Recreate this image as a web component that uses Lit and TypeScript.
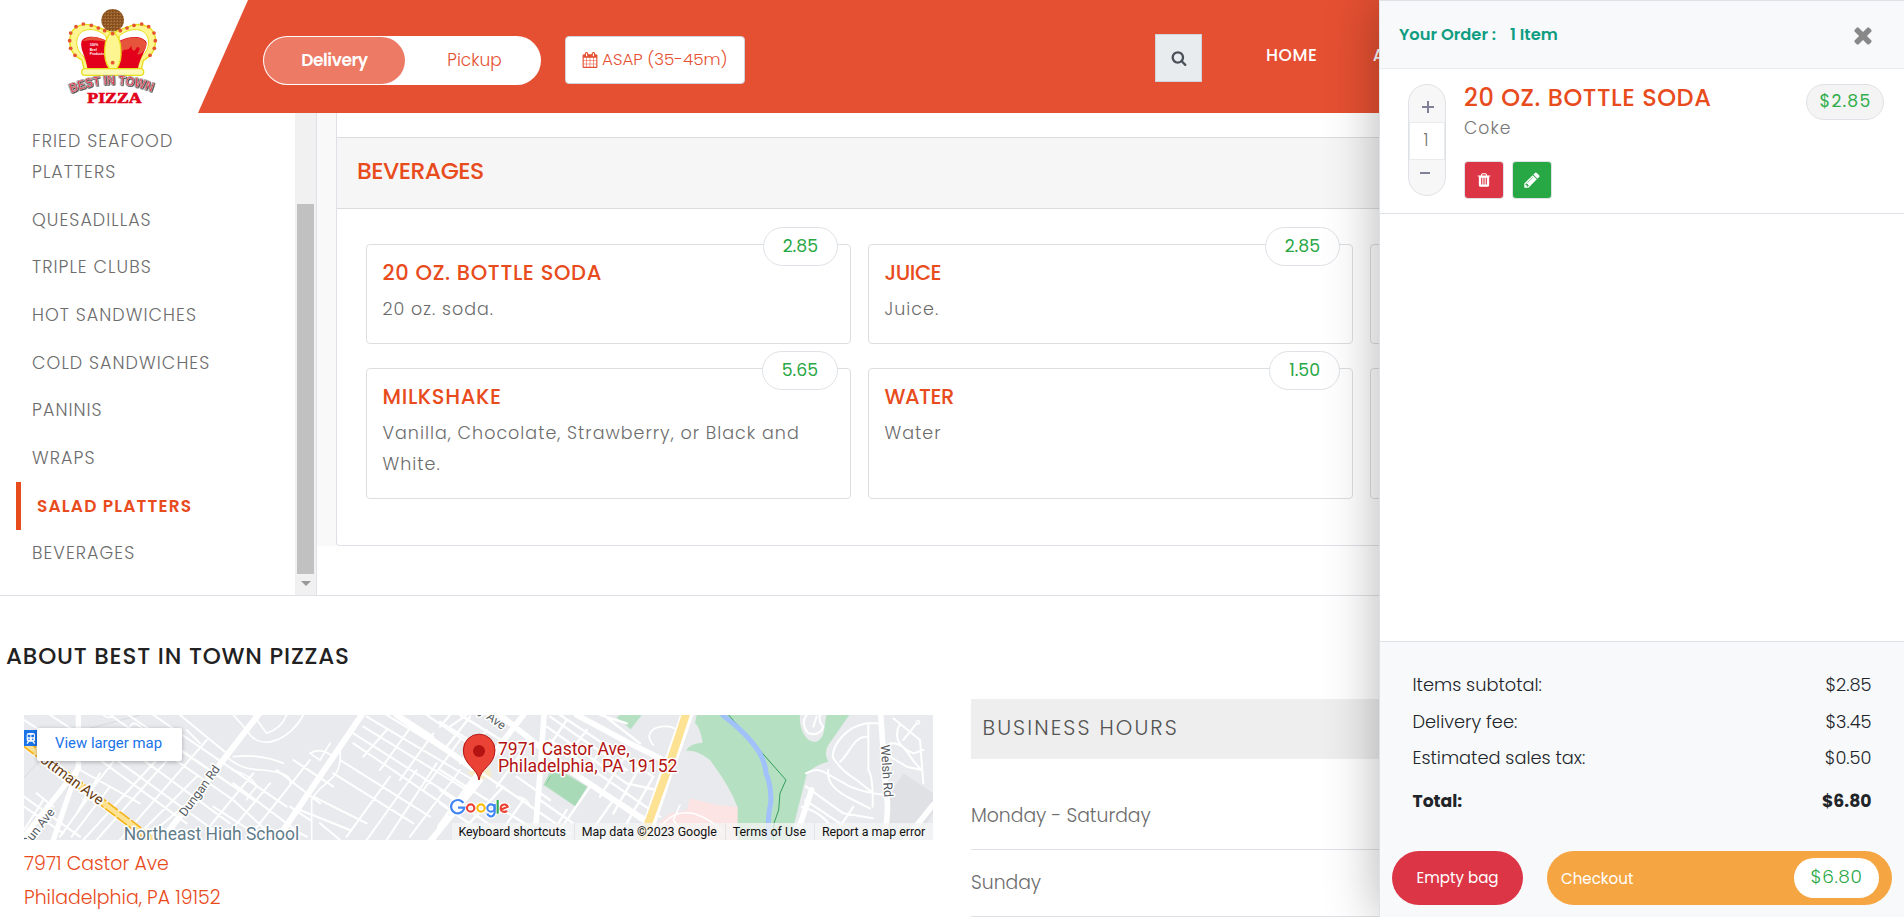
import { LitElement, html, svg, css } from "lit";
import { classMap } from "lit/directives/class-map.js";

const ICONS: Record<string, string> = {
  search: "M1216 832q0-185-131.5-316.5t-316.5-131.5-316.5 131.5-131.5 316.5 131.5 316.5 316.5 131.5 316.5-131.5 131.5-316.5zm512 832q0 52-38 90t-90 38q-54 0-90-38l-343-342q-179 124-399 124-143 0-273.5-55.5t-225-150-150-225-55.5-273.5 55.5-273.5 150-225 225-150 273.5-55.5 273.5 55.5 225 150 150 225 55.5 273.5q0 220-124 399l343 343q37 37 37 90z",
  trash: "M704 1376v-704q0-14-9-23t-23-9h-64q-14 0-23 9t-9 23v704q0 14 9 23t23 9h64q14 0 23-9t9-23zm256 0v-704q0-14-9-23t-23-9h-64q-14 0-23 9t-9 23v704q0 14 9 23t23 9h64q14 0 23-9t9-23zm256 0v-704q0-14-9-23t-23-9h-64q-14 0-23 9t-9 23v704q0 14 9 23t23 9h64q14 0 23-9t9-23zm-544-992h448l-48-117q-7-9-17-11h-317q-10 2-17 11zm928 32v64q0 14-9 23t-23 9h-96v948q0 83-47 143.5t-113 60.5h-832q-66 0-113-58.5t-47-141.5v-952h-96q-14 0-23-9t-9-23v-64q0-14 9-23t23-9h309l70-167q15-37 54-63t79-26h320q40 0 79 26t54 63l70 167h309q14 0 23 9t9 23z",
  pencil: "M491 1536l91-91-235-235-91 91v107h128v128h107zm523-928q0-22-22-22-10 0-17 7l-542 542q-7 7-7 17 0 22 22 22 10 0 17-7l542-542q7-7 7-17zm-54-192l416 416-832 832h-416v-416zm683 96q0 53-37 90l-166 166-416-416 166-165q36-38 90-38 53 0 91 38l235 234q37 39 37 91z",
  times: "M1490 1322q0 40-28 68l-136 136q-28 28-68 28t-68-28l-294-294-294 294q-28 28-68 28t-68-28l-136-136q-28-28-28-68t28-68l294-294-294-294q-28-28-28-68t28-68l136-136q28-28 68-28t68 28l294 294 294-294q28-28 68-28t68 28l136 136q28 28 28 68t-28 68l-294 294 294 294q28 28 28 68z",
  calendar: "M192 1664h288v-288h-288v288zm352 0h320v-288h-320v288zm-352-352h288v-320h-288v320zm352 0h320v-320h-320v320zm-352-384h288v-288h-288v288zm736 736h320v-288h-320v288zm-384-736h320v-288h-320v288zm768 736h288v-288h-288v288zm-384-352h320v-320h-320v320zm-352-864v-288q0-13-9.5-22.5t-22.5-9.5h-64q-13 0-22.5 9.5t-9.5 22.5v288q0 13 9.5 22.5t22.5 9.5h64q13 0 22.5-9.5t9.5-22.5zm736 864h288v-320h-288v320zm-384-384h320v-288h-320v288zm384 0h288v-288h-288v288zm32-480v-288q0-13-9.5-22.5t-22.5-9.5h-64q-13 0-22.5 9.5t-9.5 22.5v288q0 13 9.5 22.5t22.5 9.5h64q13 0 22.5-9.5t9.5-22.5zm384-64v1280q0 52-38 90t-90 38h-1408q-52 0-90-38t-38-90v-1280q0-52 38-90t90-38h128v-96q0-66 47-113t113-47h64q66 0 113 47t47 113v96h384v-96q0-66 47-113t113-47h64q66 0 113 47t47 113v96h128q52 0 90 38t38 90z",
};

const icon = (name: string, size: number) => html`<svg class="icon" width=${size} height=${size} viewBox="0 0 1792 1792" aria-hidden="true"><path fill="currentColor" d=${ICONS[name]} /></svg>`;

class BrandLogo extends LitElement {
  static styles = css`
    :host { display: block; }
    svg { display: block; }
    .ribbon { font: 700 39px "Liberation Sans", Arial, sans-serif; filter: drop-shadow(2px 2px 0 #333) drop-shadow(-1px 0 0 #666); }
    .word { font: 700 46px "Liberation Serif", serif; }
  `;
  render() {
    const beads: [number, number][] = [[228, 80], [250, 72], [274, 76], [295, 84], [314, 92], [212, 99], [209, 122], [212, 145], [225, 166], [338, 101], [361, 92], [381, 84], [402, 76], [425, 72], [446, 80], [462, 99], [466, 122], [463, 145], [450, 166], [338, 188]];
    return html`
      <svg width="92" height="98" viewBox="198 21 276 294">
        <defs>
          <pattern id="crumb" width="9" height="9" patternUnits="userSpaceOnUse">
            <rect width="9" height="9" fill="#7b4218" />
            <path d="M1 1h3v3h-3zM5 5h3v2h-3zM6 1h2v2h-2zM1 6h2v2h-2z" fill="#d09a4e" />
          </pattern>
          <path id="arc" d="M214 279Q338 227 466 279" />
        </defs>
        <circle cx="338" cy="61" r="34" fill="url(#crumb)" />
        <path d="M252 208L246 180C215 165 206 140 210 112C216 78 250 66 282 78C310 86 324 94 338 100C352 94 370 84 396 76C428 68 460 80 466 112C470 142 458 166 430 182L424 208Z" fill="#fdf58f" stroke="#e8df1c" stroke-width="4" />
        <path d="M250 168C226 150 222 110 248 94C272 82 300 92 318 108L322 150L300 190L262 196Z" fill="#fff" stroke="#e8df1c" stroke-width="3" />
        <path d="M426 168C450 150 454 110 428 94C404 82 376 92 358 108L354 150L376 190L414 196Z" fill="#fff" stroke="#e8df1c" stroke-width="3" />
        <path d="M262 205C258 170 240 150 244 126C250 106 290 104 322 124L324 205Z" fill="#e2001a" />
        <path d="M414 205C420 170 440 150 440 128C430 106 388 106 356 124L354 205Z" fill="#e2001a" />
        <path d="M248 124C262 104 300 108 322 126C296 120 268 118 248 124ZM358 126C386 108 426 108 438 128C442 150 418 168 412 162C424 144 418 140 410 142C404 160 394 152 394 136C384 160 372 140 368 156C364 150 366 136 358 144Z" fill="#e6553b" />
        <path d="M338 96C308 110 308 180 328 206H350C370 180 368 110 338 96Z" fill="#fdf58f" stroke="#e8df1c" stroke-width="4" />
        <rect x="245" y="206" width="186" height="20" rx="10" fill="#fdf9b8" stroke="#e8df1c" stroke-width="4" />
        ${beads.map(([x, y]) => svg`<circle cx=${x} cy=${y} r="5.6" fill="#e5532f" />`)}
        <g fill="#fff" font-family="Liberation Sans" font-size="10" font-weight="700">
          <text x="269" y="138">100%</text><text x="269" y="152">Beef</text><text x="269" y="166">Products</text>
        </g>
        <text class="ribbon" fill="#e23a4a" stroke="#d6d6d6" stroke-width="1.5"><textPath href="#arc" textLength="248" lengthAdjust="spacingAndGlyphs">BEST IN TOWN</textPath></text>
        <text class="word" x="262" y="308" fill="#e2001a" stroke="#e2001a" stroke-width="2" textLength="163" lengthAdjust="spacingAndGlyphs">PIZZA</text>
      </svg>`;
  }
}
customElements.define("brand-logo", BrandLogo);

class StoreMap extends LitElement {
  static styles = css`
    :host { display: block; position: relative; height: 125px; overflow: hidden; font-family: Roboto, sans-serif; }
    svg { display: block; }
    text { font-family: Roboto, sans-serif; }
    .larger { position: absolute; left: 13px; top: 13px; width: 145px; height: 33px; background: #fff; border-radius: 2px; box-shadow: 0 1px 4px rgba(0, 0, 0, .3); color: #1a73e8; font-size: 14.9px; line-height: 31px; padding-left: 18px; box-sizing: border-box; white-space: nowrap; }
    .legal { position: absolute; right: 0; bottom: 0; display: flex; height: 17px; line-height: 17px; font-size: 12.4px; color: #111; background: rgba(245, 245, 245, .75); white-space: nowrap; }
    .legal span { padding: 0 8.3px 0 6.6px; }
    .legal span:last-child { padding-right: 7.700px; }
    .legal span + span { border-left: 1px solid #e3e4e7; }
  `;
  render() {
    return html`
      <svg width="909" height="125" viewBox="0 0 909 125">
        <rect width="909" height="125" fill="#e8eaed" />
        <g transform="translate(-24 -25) scale(.33333)" fill="none" stroke="#fff" stroke-linecap="round">
          <path stroke="#d8dade" stroke-width="3" d="M72 262L130 200M250 120L420 75M165 450L215 250" />
          <path stroke-width="6" d="M150 75L235 130M72 90L120 120M330 75L700 330L830 450M385 75L760 330M460 75L860 350M540 75L680 190M230 130L240 170M300 210L560 400M350 210L640 420M430 210L690 400M500 150L760 330M560 120L600 160M72 350L190 430M72 320L240 440M110 310L160 350M240 240L420 340M250 450L460 220M290 450L520 190M360 450L620 150M215 440L330 290M180 440L260 330M400 450L590 260M430 450L610 300M620 420L760 250M670 450L810 280M740 450L930 210M330 360L470 210M250 330L340 215M230 370L300 250M72 420L130 330M640 350L780 440M700 280L900 430M880 210L1000 290M830 240L960 340" />
          <path stroke-width="5" d="M700 75L740 120C780 190 870 150 910 75M760 75L800 130C830 120 850 100 860 75M740 110Q700 160 680 200Q720 240 790 240Q880 250 870 280M700 200Q780 190 850 220M1020 180C1030 280 960 270 935 330V450M1000 200Q960 170 930 190L960 210L990 160M390 110Q400 90 420 110L500 160M310 75Q330 90 340 75M700 240Q760 260 770 290Q750 310 740 330" />
          <path stroke-width="6" d="M900 360L1050 420M940 320L1100 400M1000 250L1240 400M1020 210L1290 380M1060 160L1340 350M1060 130L1390 340M1090 110L1400 300M1100 80L1420 270M1160 75L1430 240M1200 75L1300 140M1280 75L1420 170M1040 440L1170 260M1100 450L1250 240M1160 450L1310 220M1230 440L1380 240M1090 200L1160 120M1140 240L1240 100M1200 270L1300 130M1270 300L1380 150M960 400L1020 450M870 350L930 390M880 420L920 440M1380 75L1440 110M1350 110L1400 75" />
          <path stroke-width="16" d="M235 75V230L160 450M72 440L235 235" />
          <path stroke-width="18" d="M778 70L500 430M1085 75L830 450M1190 75L1440 250M1440 270L1290 455" />
          <path stroke="#fff" stroke-width="26" d="M72 160L440 440" />
          <path stroke="#fde293" stroke-width="20" d="M72 160L440 440L460 452" />
          <path stroke="#f5b31c" stroke-width="5" stroke-dasharray="34 10" d="M72 170L440 450M80 152L450 434" />
        </g>
        <g transform="translate(416 -25) scale(.33333)" fill="none" stroke="#fff" stroke-linecap="round" stroke-linejoin="round">
          <g stroke="none">
            <path fill="#b6e0c2" d="M770 75H1080C1076 120 1100 160 1130 155C1160 140 1150 105 1160 75H1228L1165 165Q1150 190 1165 215Q1110 230 1098 260L1050 450H890L892 350Q870 290 810 210Q770 180 738 182Q750 160 788 158Q780 110 765 100Z" />
            <path fill="#b6e0c2" d="M530 82L540 75H605L572 118ZM340 225L440 290L405 348L310 285Z" />
            <path fill="#fbe4e3" d="M680 450L640 410L690 370L740 360L750 325L830 345L893 350V450Z" />
            <path fill="#dfe1e5" d="M1340 330L1390 250L1479 310V370L1430 450H1350Z" />
            <path fill="#f6ecc8" d="M80 245L150 235L155 262L110 270Z" />
          </g>
          <path stroke="#2f9d5b" stroke-width="3" d="M866 75L1038 270L1020 310L1016 360L1002 400L1000 450M318 284L330 262L350 250" />
          <path stroke="#a0c1f9" stroke-width="15" d="M848 75Q900 115 930 150Q975 200 978 250Q995 290 992 340Q982 380 985 450" />
          <path stroke-width="7" d="M0 95L110 165M0 170L120 245L390 430M0 240L300 430M0 300L200 440M0 340L130 430M60 75L250 190M330 80L560 240M360 75L640 260M320 110L560 280M330 150L660 380M330 200L640 400M300 330L400 400M230 260L330 330M140 120L60 220M200 160L120 240M250 180L170 290M380 90L320 180M440 120L380 200M500 160L440 240M560 190L480 320M600 230L520 370M640 260L560 400M190 290L60 430M250 330L180 430M380 360L330 440M450 290L360 420M520 330L450 430M480 75L560 100M560 280L650 300M490 75L600 160M30 75L0 110M90 80L20 170" />
          <path stroke-width="5" d="M640 165C610 130 640 105 690 110Q710 115 720 130M640 430C680 390 700 360 760 370Q820 390 850 430M720 345L700 390L740 440M230 320Q260 320 270 350" />
          <path stroke-width="6" d="M1100 75Q1080 100 1105 130Q1140 140 1150 110Q1135 95 1140 75M1130 80L1120 110M1320 100H1280C1220 110 1180 160 1178 200Q1200 240 1250 270L1300 310M1280 140C1240 140 1230 190 1200 215M1285 100V240Q1300 260 1298 350M1098 250Q1130 230 1160 250L1230 290Q1280 310 1340 315M1165 240Q1155 290 1240 330L1290 355M1098 290L1210 370L1298 385M1095 330L1200 400M1240 350L1200 410M1085 350Q1160 370 1190 440M1350 160C1400 155 1400 200 1445 240M1380 100Q1350 160 1420 190L1450 180M1360 85L1440 150L1450 280M1350 200L1400 230L1445 240M1390 150L1430 100" />
          <path stroke-width="17" d="M312 75L300 250L288 400M0 410L100 270L250 75M180 75L380 235L610 390M410 75L560 155L660 205M1322 75L1338 300Q1350 360 1330 450M1479 345L1395 450M1065 450L1115 300" />
          <path fill="#a9dab8" stroke="none" d="M345 238L442 290L405 348L316 284Z" />
          <path stroke="#fff" stroke-width="38" d="M742 70Q690 220 675 260L610 455" />
          <path stroke="#fde293" stroke-width="24" stroke-linecap="butt" d="M742 60Q690 220 675 260L605 455" />
          <circle cx="1434" cy="97" r="5" stroke-width="4" />
        </g>
        <g transform="translate(-24 -25) scale(.33333)" stroke="#fff" stroke-width="9" paint-order="stroke" stroke-linejoin="round">
          <text transform="translate(118 214) rotate(36.5)" font-size="44" fill="#6b3d12" stroke-width="11">ottman Ave</text>
          <text transform="translate(82 474) rotate(-52)" font-size="37" fill="#555a60">Gun Ave</text>
          <text transform="translate(556 382) rotate(-54)" font-size="37" fill="#555a60">Dungan Rd</text>
          <text x="371" y="449" font-size="52.4" fill="#5f7c8a">Northeast High School</text>
        </g>
        <g transform="translate(416 -25) scale(.33333)" stroke="#fff" stroke-width="9" paint-order="stroke" stroke-linejoin="round">
          <text transform="translate(100 58) rotate(36)" font-size="37" fill="#555a60">ey Ave</text>
          <text transform="translate(1322 165) rotate(86)" font-size="38" fill="#555a60">Welsh Rd</text>
          <text x="174" y="194" font-size="52.6" fill="#b31412">7971 Castor Ave,</text>
          <text x="174" y="246" font-size="53" fill="#b31412">Philadelphia, PA 19152</text>
        </g>
        <g transform="translate(416 -25) scale(.33333)">
          <path d="M117 270C113 235 70 225 70 180A47.500 47.500 0 0 1 165 180C165 225 121 235 117 270Z" fill="#ea4335" stroke="#b31412" stroke-width="3" />
          <circle cx="117" cy="183" r="18" fill="#b31412" />
          <g fill="none" stroke="#fff" stroke-width="14">
            <path d="M70 339A20 20 0 1 0 73 353H54" /><circle cx="92" cy="354" r="11" /><circle cx="123" cy="354" r="11" /><circle cx="153" cy="354" r="11" /><path d="M164 342V367Q162 380 151 379Q144 378 142 371M173 330V371M182 359L203 350A11 11 0 1 0 201 362" />
          </g>
          <g fill="none" stroke-width="6.500">
            <path stroke="#4285f4" d="M70 339A20 20 0 1 0 73 353H54" />
            <circle stroke="#ea4335" cx="92" cy="354" r="11" /><circle stroke="#fbbc04" cx="123" cy="354" r="11" />
            <circle stroke="#4285f4" cx="153" cy="354" r="11" /><path stroke="#4285f4" d="M164 342V367Q162 380 151 379Q144 378 142 371" />
            <path stroke="#34a853" d="M173 330V371" /><path stroke="#ea4335" d="M182 359L203 350A11 11 0 1 0 201 362" />
          </g>
        </g>
        <g transform="translate(-24 -25) scale(.33333)">
          <rect x="72" y="120" width="39" height="48" fill="#1a73e8" />
          <rect x="80" y="129" width="25" height="26" rx="6" fill="#fff" /><path d="M83 134h8v8h-8zM94 134h8v8h-8z" fill="#1a73e8" />
          <circle cx="87" cy="148" r="2.500" fill="#1a73e8" /><circle cx="98" cy="148" r="2.500" fill="#1a73e8" />
          <path d="M86 154L81 161M99 154L104 161" stroke="#fff" stroke-width="4" />
        </g>
      </svg>
      <div class="larger">View larger map</div>
      <div class="legal"><span>Keyboard shortcuts</span><span>Map data ©2023 Google</span><span>Terms of Use</span><span>Report a map error</span></div>`;
  }
}
customElements.define("store-map", StoreMap);

const CATEGORIES = ["Fried Seafood Platters", "Quesadillas", "Triple Clubs", "Hot Sandwiches", "Cold Sandwiches", "Paninis", "Wraps", "Salad Platters", "Beverages"];
const ACTIVE = "Salad Platters";
const PRODUCTS = [
  { name: "20 oz. Bottle Soda", text: "20 oz. soda.", price: "2.85" },
  { name: "Juice", text: "Juice.", price: "2.85" },
  null,
  { name: "Milkshake", text: "Vanilla, Chocolate, Strawberry, or Black and White.", price: "5.65" },
  { name: "Water", text: "Water", price: "1.50" },
  null,
];
const TOTALS = [["Items subtotal:", "$2.85"], ["Delivery fee:", "$3.45"], ["Estimated sales tax:", "$0.50"]];

class OrderDrawer extends LitElement {
  static styles = css`
    :host { display: flex; flex-direction: column; box-sizing: border-box; background: #fff; border: 1px solid #dee2e6; border-width: 1px 0 0 1px; box-shadow: 0 0 50px rgba(0, 0, 0, .3); }
    .icon { display: block; }
    .head { height: 67px; display: flex; align-items: center; justify-content: space-between; background: #f8f9fb; border-bottom: 1px solid #e9ecef; padding: 0 28px 0 19px; color: #0f9d82; font-weight: 600; font-size: 16.3px; }
    .head b { font-weight: 600; margin-left: 10px; }
    .head .icon { color: #888; }
    .item { height: 145px; display: flex; align-items: flex-start; border-bottom: 1px solid #dee2e6; padding: 15px 20px 0 28px; box-sizing: border-box; }
    .qty { width: 38px; height: 112px; box-sizing: border-box; border: 1px solid #dee2e6; border-radius: 19px; background: #f7f7f7; display: grid; grid-template-rows: 37px 38px 1fr; color: #808098; margin-right: 18px; }
    .qty svg { display: block; margin: 16px 0 0 13px; }
    .qty svg.minus { margin: 12px 0 0 11px; }
    .count { background: #fff; border: 1px solid #e9ecef; box-sizing: border-box; color: #777; font-size: 17px; line-height: 35px; padding-left: 13.5px; font-weight: 300; }
    .info { flex: 1; }
    .title { color: #e84b1c; font-size: 24px; font-weight: 500; letter-spacing: .57px; line-height: 27px; }
    .opt { color: #777; font-size: 17.2px; font-weight: 300; letter-spacing: 1.1px; line-height: 30px; margin: 2px 0 18px; }
    .actions { display: flex; gap: 10px; padding-left: 1px; }
    .btn { width: 38px; height: 36px; border-radius: 3px; display: grid; place-items: center; color: #fff; background: #dc3545; box-shadow: 0 0 0 1px #dee2e6; margin-top: 1px; }
    .btn.edit { background: #28a745; }
    .price { width: 78px; height: 36px; box-sizing: border-box; border: 1px solid #dee2e6; border-radius: 18px; background: #f4f4f4; color: #2fae4b; font-size: 17.2px; letter-spacing: 1.2px; line-height: 33px; text-align: center; padding-left: 1px; }
    .body { flex: 1; }
    .foot { height: 250px; background: #f8f9fb; border-top: 1px solid #dee2e6; padding: 25px 12px 0; color: #212529; }
    .row { display: flex; justify-content: space-between; height: 36.500px; line-height: 36.500px; padding: 0 20.500px; font-size: 17.8px; font-weight: 300; }
    .row.total { margin-top: 6px; font-weight: 700; font-size: 17.2px; line-height: 36px; }
    .cta { display: flex; gap: 24px; margin-top: 32px; color: #fff; font-size: 15.1px; }
    .empty { width: 131px; height: 54px; border-radius: 27px; background: #dc3545; line-height: 54px; text-align: center; }
    .checkout { flex: 1; display: flex; align-items: center; justify-content: space-between; height: 54px; border-radius: 27px; background: #f5a541; padding: 0 13px 0 14px; }
    .sum { width: 85px; height: 40px; border-radius: 20px; background: #fff; color: #28a745; font-size: 18.5px; font-weight: 300; letter-spacing: .6px; line-height: 38px; text-align: center; }
  `;
  render() {
    return html`
      <div class="head"><span>Your Order : <b>1 Item</b></span>${icon("times", 26)}</div>
      <div class="item">
        <div class="qty">
          <svg width="12" height="12" viewBox="0 0 12 12"><path d="M6 0V12M0 6H12" stroke="currentColor" stroke-width="2" /></svg>
          <div class="count">1</div>
          <svg class="minus" width="10" height="2" viewBox="0 0 10 2"><path d="M0 1H10" stroke="currentColor" stroke-width="2" /></svg>
        </div>
        <div class="info">
          <div class="title">20 OZ. BOTTLE SODA</div>
          <div class="opt">Coke</div>
          <div class="actions"><div class="btn">${icon("trash", 16)}</div><div class="btn edit">${icon("pencil", 18)}</div></div>
        </div>
        <div class="price">$2.85</div>
      </div>
      <div class="body"></div>
      <div class="foot">
        ${TOTALS.map(([label, sum]) => html`<div class="row"><span>${label}</span><span>${sum}</span></div>`)}
        <div class="row total"><span>Total:</span><span>$6.80</span></div>
        <div class="cta"><div class="empty">Empty bag</div><div class="checkout">Checkout<div class="sum">$6.80</div></div></div>
      </div>`;
  }
}
customElements.define("order-drawer", OrderDrawer);

class AppRoot extends LitElement {
  static styles = css`
    :host { display: block; position: relative; width: 1904px; height: 917px; overflow: hidden; background: #fff; font-family: Poppins, Inter, sans-serif; color: #6c6c6c; }
    * { box-sizing: border-box; }
    .icon { display: block; }
    .header { display: flex; height: 113px; }
    .logo { width: 198px; padding: 7px 0 0 66px; }
    .bar { flex: 1; display: flex; align-items: flex-start; background: #e55032; clip-path: polygon(50px 0, 100% 0, 100% 100%, 0 100%); padding-left: 65px; }
    .toggle { display: flex; width: 278px; height: 49px; margin-top: 36px; border-radius: 24.500px; background: #fff; padding: 1px; font-size: 17px; line-height: 46px; text-align: center; }
    .toggle .on { width: 141px; border-radius: 24px; background: #ec7a65; color: #fff; font-weight: 600; letter-spacing: -.45px; }
    .toggle .off { flex: 1; color: #e55032; font-weight: 300; padding-left: 4px; }
    .when { display: flex; align-items: center; gap: 4px; width: 180px; height: 48px; margin: 36px 0 0 24px; background: #fff; border: 1px solid #ced4da; border-radius: 4px; padding-left: 16px; color: #e55032; font-size: 16.7px; font-weight: 300; white-space: nowrap; }
    .when span { padding-bottom: 2px; }
    .search { width: 47px; height: 48px; margin: 34px 0 0 410px; background: #e9ecef; border: 1px solid #ced4da; display: grid; place-items: center; color: #495057; }
    .menu { display: flex; gap: 55px; margin: 40px 0 0 64px; color: #fff; font-weight: 500; font-size: 17px; letter-spacing: .6px; line-height: 30px; }
    .main { display: flex; height: 483px; border-bottom: 1px solid #dee2e6; }
    .side { display: flex; width: 317px; border-right: 1px solid #dee2e6; }
    .cats { flex: 1; padding: 4.500px 60px 0 16px; }
    .cat { padding: 8.350px 0 8.350px 16px; font-size: 17.5px; font-weight: 300; letter-spacing: 1.05px; line-height: 31px; text-transform: uppercase; }
    .cat.active { border-left: 5px solid #e84b1c; color: #e84b1c; font-weight: 600; font-size: 17px; letter-spacing: 1.16px; line-height: 30px; padding-bottom: 9.350px; }
    .track { width: 21px; background: #f1f1f1; display: flex; flex-direction: column; align-items: center; padding-top: 91px; }
    .thumb { width: 17px; height: 370px; background: #c1c1c1; }
    .down { margin-top: 7px; border: 5px solid transparent; border-top-color: #999; border-bottom: 0; }
    .content { flex: 1; align-self: flex-start; background: #f9f9f9; padding-left: 19px; }
    .panel { height: 433px; background: #fff; border: 1px solid #dee2e6; border-top: 0; border-radius: 0 0 4px 4px; padding-top: 24px; }
    .section { height: 72px; line-height: 66px; background: #f6f6f6; border: 1px solid #dcdcdc; border-width: 1px 0; padding-left: 20px; color: #e84b1c; font-size: 23.500px; font-weight: 500; letter-spacing: -.55px; }
    .grid { display: grid; grid-template-columns: repeat(3, 485px); gap: 24px 17px; padding: 35px 0 0 29px; }
    .card { position: relative; border: 1px solid #dcdee2; border-radius: 4px; padding: 11.500px 20px 18.500px 15.500px; min-height: 100px; }
    .name { color: #e84b1c; font-size: 21px; font-weight: 500; letter-spacing: .66px; line-height: 31px; text-transform: uppercase; }
    .card:nth-child(3n + 2) .name { letter-spacing: -.5px; }
    .text { margin-top: 6px; font-size: 17.500px; font-weight: 300; letter-spacing: 1px; line-height: 31px; }
    .tag { position: absolute; top: -18px; right: 12px; height: 39px; border: 1px solid #dee2e6; border-radius: 19.500px; background: #fff; padding: 0 19px; color: #28a745; font-size: 17.300px; line-height: 36px; }
    .about { padding: 41px 0 0 6px; }
    h2 { margin: 0; color: #222; font-size: 23px; font-weight: 500; letter-spacing: .82px; line-height: 38px; }
    .cols { display: grid; grid-template-columns: 909px 1fr; column-gap: 38px; padding-left: 18px; margin-top: 24px; }
    .place { padding-top: 16px; }
    .addr { margin-top: 7px; color: #e84b1c; font-size: 18.900px; font-weight: 300; line-height: 33.700px; }
    .hours-head { height: 60px; line-height: 57px; background: #eee; padding-left: 11.5px; font-size: 21px; font-weight: 300; letter-spacing: 2.1px; color: #555; margin-bottom: 24px; }
    .day { height: 67px; line-height: 66px; border-bottom: 1px solid #dee2e6; font-size: 18.800px; font-weight: 300; color: #6c6c6c; }
    order-drawer { position: absolute; right: 0; top: 0; width: 525px; height: 917px; }
  `;
  render() {
    return html`
      <header class="header">
        <div class="logo"><brand-logo></brand-logo></div>
        <div class="bar">
          <div class="toggle"><div class="on">Delivery</div><div class="off">Pickup</div></div>
          <div class="when">${icon("calendar", 16)}<span>ASAP (35-45m)</span></div>
          <div class="search">${icon("search", 16)}</div>
          <nav class="menu"><span>HOME</span><span>ABOUT</span></nav>
        </div>
      </header>
      <div class="main">
        <aside class="side">
          <div class="cats">${CATEGORIES.map((c) => html`<div class=${classMap({ cat: true, active: c === ACTIVE })}>${c}</div>`)}</div>
          <div class="track"><div class="thumb"></div><div class="down"></div></div>
        </aside>
        <div class="content"><div class="panel">
          <div class="section">BEVERAGES</div>
          <div class="grid">${PRODUCTS.map((p) => html`<div class="card">${p ? html`<div class="name">${p.name}</div><div class="text">${p.text}</div><div class="tag">${p.price}</div>` : ""}</div>`)}</div>
        </div></div>
      </div>
      <section class="about">
        <h2>ABOUT BEST IN TOWN PIZZAS</h2>
        <div class="cols">
          <div class="place"><store-map></store-map><div class="addr">7971 Castor Ave<br />Philadelphia, PA 19152</div></div>
          <div><div class="hours-head">BUSINESS HOURS</div><div class="day">Monday - Saturday</div><div class="day">Sunday</div></div>
        </div>
      </section>
      <order-drawer></order-drawer>`;
  }
}
customElements.define("app-root", AppRoot);
